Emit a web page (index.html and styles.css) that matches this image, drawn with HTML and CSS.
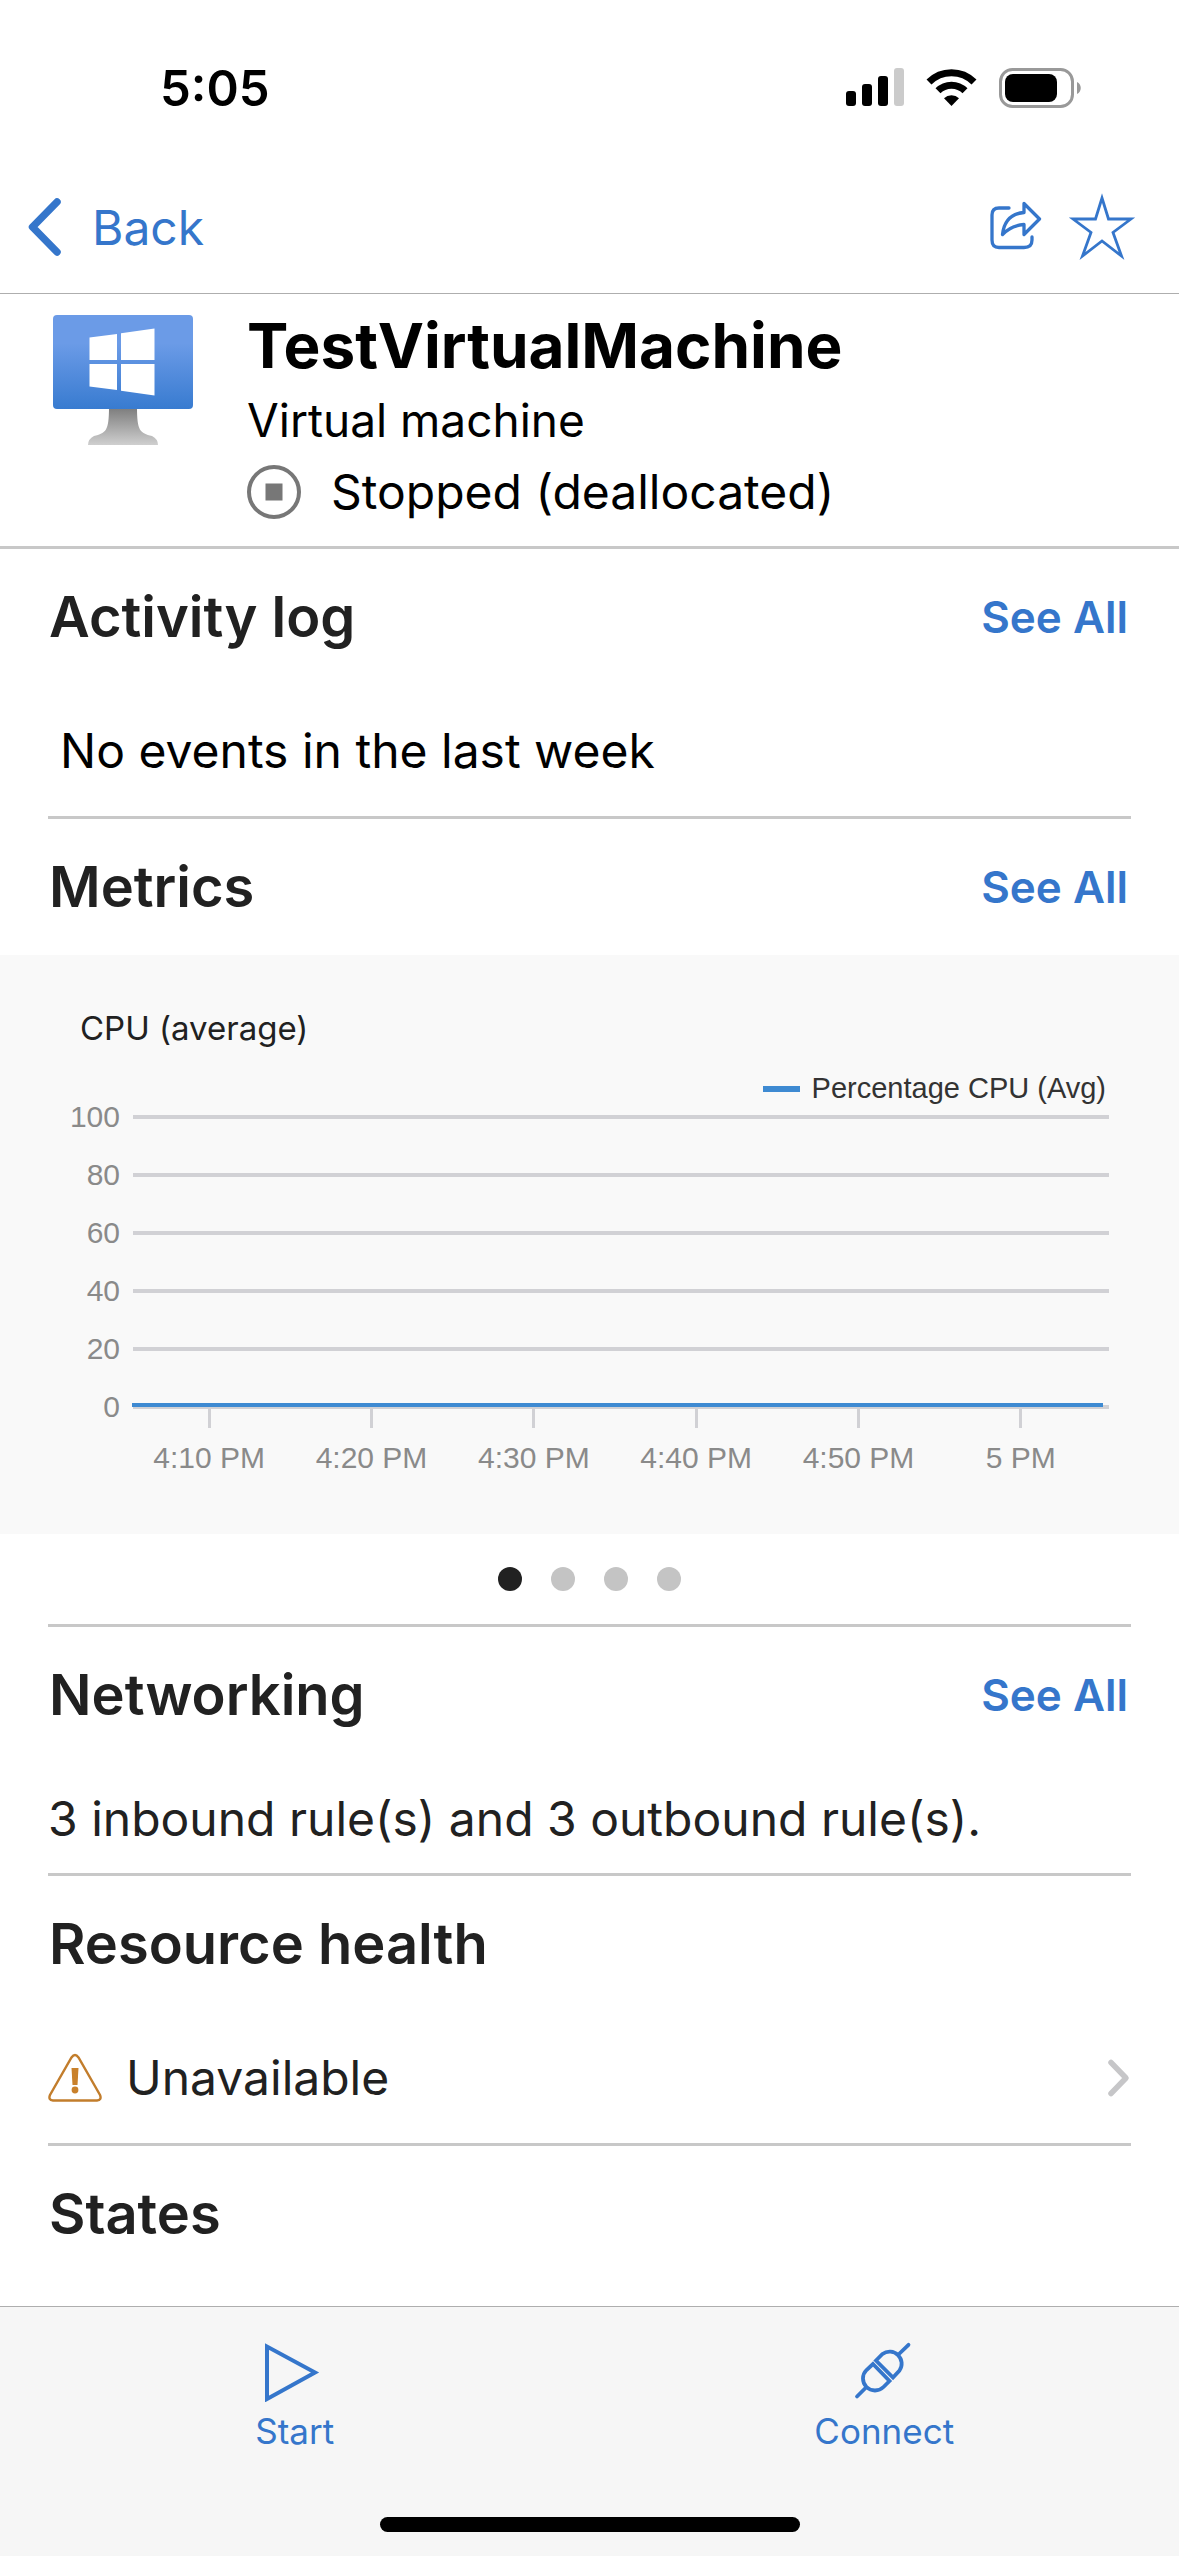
FILE: index.html
```html
<!DOCTYPE html>
<html lang="en">
<head>
<meta charset="utf-8">
<meta name="viewport" content="width=device-width, initial-scale=1">
<title>TestVirtualMachine</title>
<link rel="stylesheet" href="styles.css">
</head>
<body>
<div class="status-bar">
  <span class="status-time">5:05</span>
  <div class="status-icons">
    <svg width="58" height="40" viewBox="0 0 58 40" aria-hidden="true">
      <rect x="0" y="23" width="10" height="15" rx="3"/>
      <rect x="16" y="16" width="10" height="22" rx="3"/>
      <rect x="32" y="8" width="10" height="30" rx="3"/>
      <rect x="48" y="0" width="10" height="38" rx="3" fill="#cbcbcb"/>
    </svg>
    <svg width="51" height="40" viewBox="0 0 51 40" aria-hidden="true">
      <path d="M3 14A31.800 31.800 0 0 1 48 14" fill="none" stroke="#000" stroke-width="7"/>
      <path d="M12 22.800A19 19 0 0 1 39 22.800" fill="none" stroke="#000" stroke-width="7"/>
      <path d="M25.500 38L18 30.300A11 11 0 0 1 33 30.300Z"/>
    </svg>
    <svg width="83" height="40" viewBox="0 0 83 40" aria-hidden="true">
      <rect x="1.500" y="1.500" width="72" height="37" rx="12" fill="none" stroke="#999" stroke-width="3"/>
      <rect x="6" y="6" width="52" height="28" rx="8"/>
      <path d="M78 14C83 16 83 24 78 26Z" fill="#999"/>
    </svg>
  </div>
</div>

<header class="nav-bar">
  <a class="back" href="#">
    <svg width="34" height="60" viewBox="0 0 34 60" aria-hidden="true"><path d="M29 5L4.500 30L29 55" fill="none" stroke="currentColor" stroke-width="7.500" stroke-linecap="round" stroke-linejoin="round"/></svg>
    Back
  </a>
  <div class="nav-actions">
    <button class="icon-button" type="button" aria-label="Share">
      <svg width="56" height="56" viewBox="0 0 56 56" aria-hidden="true"><g fill="none" stroke="currentColor" stroke-width="3.300" stroke-linecap="round" stroke-linejoin="round"><path d="M22 9H12Q5 9 5 16V41Q5 48.500 12 48.500H37Q45 48.500 45 41V38"/><path d="M37 4.500L52.500 20L37 35.500V25.500Q24 26.500 15.500 35.500Q18 15 37 13.500Z"/></g></svg>
    </button>
    <button class="icon-button" type="button" aria-label="Add to favorites">
      <svg width="70" height="70" viewBox="0 0 70 70" aria-hidden="true"><path d="M35 6L41.500 27H64L46 40.500L54.500 64L35 49L15.500 64L24 40.500L6 27H28.500Z" fill="none" stroke="currentColor" stroke-width="2.800"/></svg>
    </button>
  </div>
</header>

<main>
  <section class="hero">
    <svg class="vm-icon" width="140" height="130" viewBox="0 0 140 130" aria-hidden="true">
      <defs>
        <linearGradient id="screen" x1="0" y1="0" x2="0" y2="1"><stop offset="0" stop-color="#6b9be7"/><stop offset=".3" stop-color="#6b9be7"/><stop offset="1" stop-color="#387bd0"/></linearGradient>
        <linearGradient id="stand" x1="0" y1="0" x2="0" y2="1"><stop offset="0" stop-color="#7b7b7b"/><stop offset="1" stop-color="#cfcfcf"/></linearGradient>
      </defs>
      <path d="M56 92H84C84 116 87 118 99 121Q105 124 105 130H35Q35 124 41 121C53 118 56 116 56 92Z" fill="url(#stand)"/>
      <rect width="140" height="94" rx="4" fill="url(#screen)"/>
      <path d="M36.500 22.500L64 19V45H36.500ZM68 18.300L101.500 13.500V45H68ZM36.500 49H64V75L36.500 71.500ZM68 49H101.500V80.500L68 75.800Z" fill="#fff"/>
    </svg>
    <div class="hero-text">
      <h1 class="hero-title">TestVirtualMachine</h1>
      <p class="hero-type">Virtual machine</p>
      <p class="hero-state">
        <svg width="54" height="54" viewBox="0 0 54 54" aria-hidden="true"><circle cx="27" cy="27" r="25" fill="none" stroke="#777" stroke-width="4"/><rect x="18.500" y="18.500" width="17" height="17" fill="#777"/></svg>
        Stopped (deallocated)
      </p>
    </div>
  </section>

  <section class="section">
    <div class="section-head"><h2>Activity log</h2><a class="see-all" href="#">See All</a></div>
    <p class="row row-empty">No events in the last week</p>
  </section>

  <section class="section">
    <div class="section-head"><h2>Metrics</h2><a class="see-all" href="#">See All</a></div>
    <figure class="chart">
      <figcaption class="chart-title">CPU (average)</figcaption>
      <div class="legend">Percentage CPU (Avg)</div>
      <div class="scale">
        <div class="scale-row">100</div>
        <div class="scale-row">80</div>
        <div class="scale-row">60</div>
        <div class="scale-row">40</div>
        <div class="scale-row">20</div>
        <div class="scale-row">0<span class="series"></span></div>
      </div>
      <ol class="time-axis">
        <li>4:10 PM</li>
        <li>4:20 PM</li>
        <li>4:30 PM</li>
        <li>4:40 PM</li>
        <li>4:50 PM</li>
        <li>5 PM</li>
      </ol>
    </figure>
    <div class="pager">
      <button class="dot dot-active" type="button" aria-label="Page 1"></button>
      <button class="dot" type="button" aria-label="Page 2"></button>
      <button class="dot" type="button" aria-label="Page 3"></button>
      <button class="dot" type="button" aria-label="Page 4"></button>
    </div>
  </section>

  <section class="section">
    <div class="section-head"><h2>Networking</h2><a class="see-all" href="#">See All</a></div>
    <p class="row row-compact">3 inbound rule(s) and 3 outbound rule(s).</p>
  </section>

  <section class="section">
    <div class="section-head"><h2>Resource health</h2></div>
    <a class="row row-link" href="#">
      <svg width="54" height="50" viewBox="0 0 54 50" aria-hidden="true"><path d="M23.500 4.500Q27 -.500 30.500 4.500L52 42Q54 47 49 47.500H5Q0 47 2 42Z" fill="none" stroke="#c27d2c" stroke-width="2.400"/><path d="M23.500 15H30.500L29.500 32H24.500Z" fill="#c9812b"/><circle cx="27" cy="37" r="3.400" fill="#c9812b"/></svg>
      <span class="row-label">Unavailable</span>
      <svg width="24" height="40" viewBox="0 0 24 40" aria-hidden="true"><path d="M4 4.500L19 20L4 35.500" fill="none" stroke="#c6c6c8" stroke-width="5.500" stroke-linecap="round" stroke-linejoin="round"/></svg>
    </a>
  </section>

  <section class="section">
    <div class="section-head"><h2>States</h2></div>
  </section>
</main>

<footer class="tool-bar">
  <div class="tools">
    <button class="tool" type="button">
      <svg width="60" height="60" viewBox="0 0 60 60" aria-hidden="true"><path d="M2 4.500V57L50 30.500Z" fill="none" stroke="currentColor" stroke-width="4"/></svg>
      Start
    </button>
    <button class="tool" type="button">
      <svg width="60" height="60" viewBox="0 0 60 60" aria-hidden="true"><g fill="none" stroke="currentColor" stroke-width="3.800" stroke-linecap="round"><path d="M22 18.500L28.500 12A12 12 0 0 1 45.500 28.500L39 35.500Z"/><path d="M19 22L35.500 39L29.500 45A12 12 0 0 1 12.500 28Z"/><path d="M45.500 11.500L54.500 2.800M12 45.500L3 54.500"/></g></svg>
      Connect
    </button>
  </div>
  <div class="home-indicator"></div>
</footer>
</body>
</html>
```
FILE: styles.css
```css
* {
  box-sizing: border-box;
}

body {
  display: flex;
  flex-direction: column;
  min-height: 100vh;
  margin: 0;
  background: #fff;
  color: #000;
  font-family: Inter, "Liberation Sans", sans-serif;
  font-size: 48px;
}

h1, h2, p, figure, ol {
  margin: 0;
  padding: 0;
}

svg {
  display: block;
  flex: none;
}

a {
  color: #3576cb;
  text-decoration: none;
}

button {
  padding: 0;
  border: 0;
  background: none;
  color: #3576cb;
  font: inherit;
}

/* Status and navigation bars */
.status-bar {
  display: flex;
  align-items: center;
  justify-content: space-between;
  height: 161px;
  padding: 15px 97px 0 160px;
}

.status-time {
  font-size: 49px;
  font-weight: 600;
}

.status-icons {
  display: flex;
  gap: 22px;
}

.nav-bar {
  display: flex;
  align-items: center;
  justify-content: space-between;
  height: 133px;
  padding: 0 42px 0 28px;
  border-bottom: 1px solid #aeaeae;
}

.back {
  display: flex;
  align-items: center;
  gap: 30px;
}

.nav-actions {
  display: flex;
  align-items: center;
  gap: 24px;
}

/* Resource summary */
.hero {
  display: flex;
  gap: 54px;
  padding: 14px 48px 18px 53px;
  border-bottom: 3px solid #c8c8c8;
}

.vm-icon {
  margin-top: 7px;
}

.hero-title {
  font-size: 62px;
  font-weight: 700;
  line-height: 76px;
}

.hero-type {
  font-size: 46px;
  line-height: 72px;
}

.hero-state {
  display: flex;
  align-items: center;
  gap: 30px;
  line-height: 72px;
}

/* Sections */
.section {
  color: #212121;
}

.section + .section::before {
  content: "";
  display: block;
  height: 3px;
  margin: 0 48px;
  background: #c8c8c8;
}

.section-head {
  display: flex;
  align-items: center;
  justify-content: space-between;
  height: 136px;
  padding: 0 51px 0 49px;
}

.section-head h2 {
  font-size: 56px;
  font-weight: 600;
}

.see-all {
  font-size: 44px;
  font-weight: 600;
}

.row {
  display: flex;
  align-items: center;
  min-height: 131px;
  padding: 0 48px;
}

.row-empty {
  padding: 0 60px;
  color: #000;
}

.row-compact {
  min-height: 110px;
}

.row-link {
  gap: 24px;
  color: #212121;
}

.row-label {
  flex: 1;
}

/* CPU chart */
.chart {
  padding: 53px 0 60px;
  background: #f9f9f9;
  color: #8a8a8a;
  font-family: "Liberation Sans", Arial, sans-serif;
  font-size: 30px;
}

.chart-title {
  padding: 0 80px;
  color: #212121;
  font-family: Inter, "Liberation Sans", sans-serif;
  font-size: 33px;
  line-height: 40px;
}

.legend {
  display: flex;
  align-items: center;
  justify-content: flex-end;
  gap: 12px;
  margin-top: 28px;
  padding-right: 73px;
  color: #333;
  font-size: 29px;
  line-height: 25px;
}

.legend::before {
  content: "";
  width: 37px;
  height: 6px;
  background: #3e8ad2;
}

.scale {
  display: grid;
  gap: 26px;
  padding-right: 70px;
}

.scale-row {
  position: relative;
  display: grid;
  grid-template-columns: 120px 1fr;
  gap: 13px;
  align-items: center;
  line-height: 32px;
  text-align: right;
}

.scale-row::after {
  content: "";
  grid-column: 2;
  grid-row: 1;
  height: 4px;
  background: #d1d1d5;
}

.series {
  position: absolute;
  z-index: 1;
  top: 12px;
  right: 6px;
  left: 132px;
  height: 4px;
  background: #3e8ad2;
}

.time-axis {
  display: grid;
  grid-template-columns: repeat(6, 1fr);
  margin: -14px 77px 0 128px;
  line-height: 32px;
  list-style: none;
  text-align: center;
}

.time-axis li::before {
  content: "";
  display: block;
  width: 3px;
  height: 19px;
  margin: 0 auto 14px;
  background: #d1d1d5;
}

.pager {
  display: flex;
  align-items: center;
  justify-content: center;
  gap: 29px;
  height: 90px;
}

.dot {
  width: 24px;
  height: 24px;
  border-radius: 50%;
  background: #c4c4c4;
}

.dot-active {
  background: #212121;
}

/* Bottom toolbar */
.tool-bar {
  position: sticky;
  bottom: 0;
  margin-top: auto;
  padding: 35px 0 24px;
  border-top: 1px solid #aeaeae;
  background: #f6f6f6;
}

.tools {
  display: grid;
  grid-template-columns: 1fr 1fr;
}

.tool {
  display: flex;
  flex-direction: column;
  align-items: center;
  gap: 9px;
  font-size: 35px;
  line-height: 40px;
}

.home-indicator {
  width: 420px;
  height: 15px;
  margin: 66px auto 0;
  border-radius: 8px;
  background: #000;
}
```
